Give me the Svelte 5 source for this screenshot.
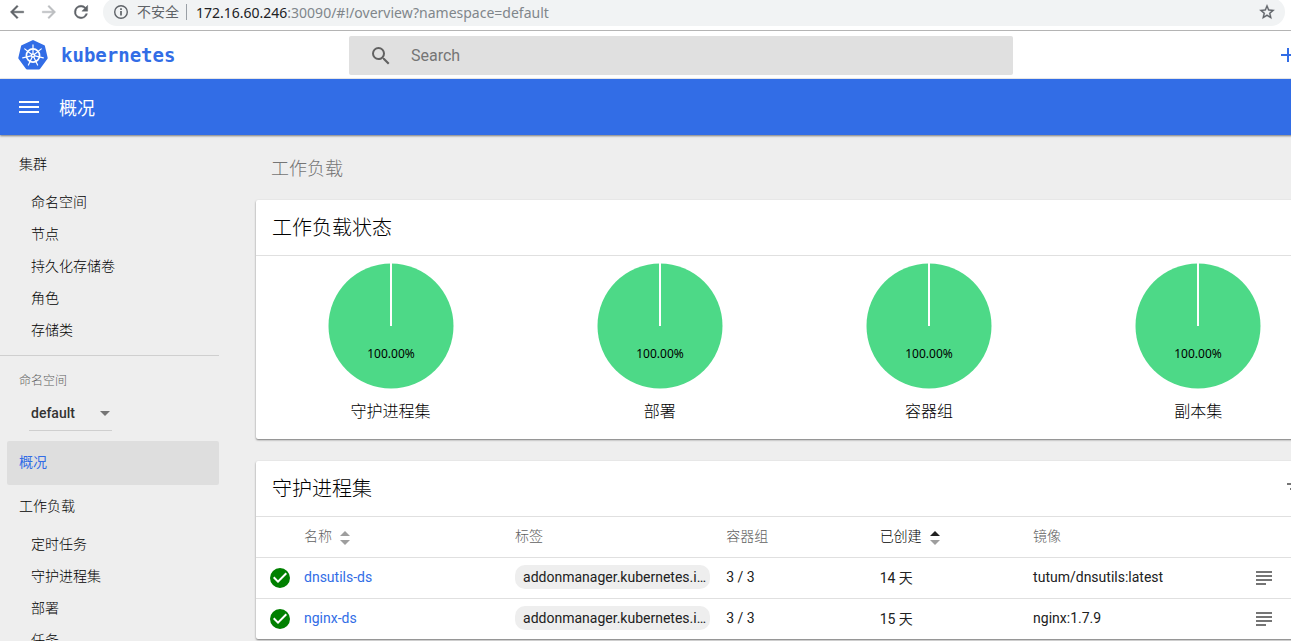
<script>
  const clusterItems = ['命名空间', '节点', '持久化存储卷', '角色', '存储类'];
  const workloadItems = ['定时任务', '守护进程集', '部署', '任务'];
  const charts = ['守护进程集', '部署', '容器组', '副本集'];
  const rows = [
    { name: 'dnsutils-ds', label: 'addonmanager.kubernetes.i…', pods: '3 / 3', age: '14 天', image: 'tutum/dnsutils:latest' },
    { name: 'nginx-ds', label: 'addonmanager.kubernetes.i…', pods: '3 / 3', age: '15 天', image: 'nginx:1.7.9' }
  ];
  const spokes = [0, 1, 2, 3, 4, 5, 6].map((i) => (i * 360) / 7);
</script>

{#snippet sorter(active)}
  <svg class="sorter" class:active width="10" height="14" viewBox="0 0 10 14" aria-hidden="true">
    <path class="up" d="M0 5 5 0l5 5z" />
    <path d="M0 9l5 5 5-5z" />
  </svg>
{/snippet}

<div class="window">
  <div class="toolbar">
    <button class="nav" aria-label="Back">
      <svg width="20" height="20" viewBox="0 0 24 24"><path d="M20 11H7.8l5.6-5.6L12 4l-8 8 8 8 1.4-1.4L7.8 13H20z" fill="#5f6368" stroke="#5f6368" stroke-width=".5" /></svg>
    </button>
    <button class="nav" aria-label="Forward">
      <svg width="20" height="20" viewBox="0 0 24 24"><path d="m12 4-1.4 1.4 5.6 5.6H4v2h12.2l-5.6 5.6L12 20l8-8z" fill="#bcbec1" stroke="#bcbec1" stroke-width=".5" /></svg>
    </button>
    <button class="nav" aria-label="Reload">
      <svg width="20" height="20" viewBox="0 0 24 24"><path d="M17.65 6.35A7.96 7.96 0 0 0 12 4a8 8 0 1 0 7.73 10h-2.08A6 6 0 1 1 12 6c1.66 0 3.14.69 4.22 1.78L13 11h7V4z" fill="#5f6368" stroke="#5f6368" stroke-width=".5" /></svg>
    </button>
    <div class="address">
      <svg width="16" height="16" viewBox="0 0 16 16" fill="none" stroke="#5f6368" aria-hidden="true">
        <circle cx="8" cy="8" r="6.3" stroke-width="1.4" />
        <path d="M8 7v4.5M8 4.3v1.6" stroke-width="1.7" />
      </svg>
      <span class="unsafe">不安全</span>
      <span class="url"><b>172.16.60.246</b>:30090/#!/overview?namespace=default</span>
      <button class="star" aria-label="Bookmark">
        <svg width="18" height="18" viewBox="0 0 24 24"><path d="m22 9.24-7.19-.62L12 2 9.19 8.63 2 9.24l5.46 4.73L5.82 21 12 17.27 18.18 21l-1.63-7.03zM12 15.4l-3.76 2.27 1-4.28-3.32-2.88 4.38-.38L12 6.1l1.71 4.04 4.38.38-3.32 2.88 1 4.28z" fill="#5f6368" stroke="#5f6368" stroke-width=".4" /></svg>
      </button>
    </div>
  </div>

  <div class="page">
    <header>
      <a class="brand" href="#!/overview">
        <svg width="30" height="30" viewBox="0 0 30 30" aria-hidden="true">
          <path d="M15 1.3 25.8 6.4 28.5 18 21 28.3H9L1.5 18 4.2 6.4z" fill="#326de6" stroke="#326de6" stroke-width="2.4" stroke-linejoin="round" />
          <g fill="none" stroke="#fff" transform="translate(15 15.5)">
            <circle r="6.6" stroke-width="1.7" />
            {#each spokes as a}
              <path d="M0-2V-10.6" stroke-width="1.2" stroke-linecap="round" transform="rotate({a})" />
            {/each}
            <circle r="2.2" fill="#fff" stroke="none" />
            <circle r=".8" fill="#326de6" stroke="none" />
          </g>
        </svg>
        <span>kubernetes</span>
      </a>
      <label class="search">
        <svg width="24" height="24" viewBox="0 0 24 24" aria-hidden="true"><path d="M15.5 14h-.79l-.28-.27A6.47 6.47 0 0 0 16 9.5 6.5 6.5 0 1 0 9.5 16c1.61 0 3.09-.59 4.23-1.57l.27.28v.79l5 4.99L20.49 19zm-6 0a4.5 4.5 0 1 1 0-9 4.5 4.5 0 0 1 0 9z" fill="#616161" /></svg>
        <input type="text" placeholder="Search" aria-label="Search" />
      </label>
      <button class="create" aria-label="Create">
        <svg width="24" height="24" viewBox="0 0 24 24"><path d="M19 13h-6v6h-2v-6H5v-2h6V5h2v6h6z" fill="#326de6" /></svg>
      </button>
    </header>

    <div class="action-bar">
      <button aria-label="Menu">
        <svg width="24" height="24" viewBox="0 0 24 24"><path d="M2 18h20v-2H2zm0-5h20v-2H2zm0-7v2h20V6z" fill="#fff" /></svg>
      </button>
      <h1>概况</h1>
    </div>

    <div class="body">
      <nav>
        <a class="top" href="#!/cluster">集群</a>
        {#each clusterItems as item}
          <a class="sub" href="#!/cluster">{item}</a>
        {/each}
        <hr />
        <div class="namespace">
          <label for="ns">命名空间</label>
          <div class="select">
            <select id="ns"><option>default</option></select>
            <svg width="10" height="5" viewBox="0 0 10 5" aria-hidden="true"><path d="M0 0h10L5 5z" fill="#757575" /></svg>
          </div>
        </div>
        <a class="top current" href="#!/overview">概况</a>
        <a class="top" href="#!/workload">工作负载</a>
        {#each workloadItems as item}
          <a class="sub" href="#!/workload">{item}</a>
        {/each}
      </nav>

      <main>
        <h2>工作负载</h2>

        <section class="card">
          <div class="card-title"><h3>工作负载状态</h3></div>
          <div class="charts">
            {#each charts as chart}
              <figure>
                <svg width="126" height="126" viewBox="0 0 126 126" role="img" aria-label={chart}>
                  <circle cx="63" cy="63" r="62.5" fill="#4dd987" />
                  <path d="M63 0v63" stroke="#fff" stroke-width="2" />
                  <text x="63" y="95" text-anchor="middle">100.00%</text>
                </svg>
                <figcaption>{chart}</figcaption>
              </figure>
            {/each}
          </div>
        </section>

        <section class="card">
          <div class="card-title">
            <h3>守护进程集</h3>
            <button aria-label="Filter">
              <svg width="24" height="24" viewBox="0 0 24 24"><path d="M10 18h4v-2h-4zM3 6v2h18V6zm3 7h12v-2H6z" fill="#757575" /></svg>
            </button>
          </div>
          <table>
            <colgroup>
              <col class="c-icon" /><col class="c-wide" /><col class="c-wide" /><col class="c-mid" /><col class="c-mid" /><col class="c-wide" /><col />
            </colgroup>
            <thead>
              <tr>
                <th></th>
                <th>名称{@render sorter(false)}</th>
                <th>标签</th>
                <th>容器组</th>
                <th class="sorted">已创建{@render sorter(true)}</th>
                <th>镜像</th>
                <th></th>
              </tr>
            </thead>
            <tbody>
              {#each rows as row}
                <tr>
                  <td class="status">
                    <svg width="24" height="24" viewBox="0 0 24 24" role="img" aria-label="OK"><path d="M12 2a10 10 0 1 0 0 20 10 10 0 0 0 0-20zm-2 15-5-5 1.41-1.41L10 14.17l7.59-7.59L19 8z" fill="#008000" /></svg>
                  </td>
                  <td><a href="#!/daemonset">{row.name}</a></td>
                  <td><span class="chip">{row.label}</span></td>
                  <td>{row.pods}</td>
                  <td>{row.age}</td>
                  <td>{row.image}</td>
                  <td class="logs">
                    <button aria-label="Logs">
                      <svg width="24" height="24" viewBox="0 0 24 24"><path d="M4 5h16v2H4zM4 9h16v2H4zM4 13h16v2H4zM4 17h10v2H4z" fill="#757575" /></svg>
                    </button>
                  </td>
                </tr>
              {/each}
            </tbody>
          </table>
        </section>
      </main>
    </div>
  </div>
</div>

<style>
  :global(body) {
    background: #eee;
    overflow: hidden;
  }
  .window {
    height: 100vh;
    overflow: hidden;
    font-family: Roboto, 'Noto Sans CJK SC', sans-serif;
    font-size: 14px;
    color: #212121;
  }
  button {
    display: flex;
    padding: 0;
    border: 0;
    background: none;
  }
  svg {
    display: block;
    flex: none;
  }
  a {
    color: inherit;
    text-decoration: none;
  }
  h1, h2, h3, figure {
    margin: 0;
    font-weight: 400;
  }
  h2, h3, figcaption, nav a, nav label, th {
    font-weight: 300;
  }
  h3, figcaption, nav {
    color: #000;
  }

  .toolbar {
    display: flex;
    align-items: flex-start;
    gap: 12px;
    height: 30px;
    padding: 0 6px 0 7px;
    background: #fff;
    border-bottom: 1px solid #b4b4b4;
  }
  .nav {
    margin-top: 2px;
  }
  .address {
    display: flex;
    flex: 1;
    align-items: center;
    height: 28px;
    margin-top: -2px;
    padding: 0 9px 0 10px;
    border-radius: 14px;
    background: #f1f3f4;
    color: #80868b;
    font-family: 'Noto Sans', 'Noto Sans CJK SC', sans-serif;
  }
  .unsafe {
    margin-left: 8px;
    padding-right: 7px;
    border-right: 1px solid #9aa0a6;
    color: #5f6368;
    line-height: 16px;
  }
  .url {
    flex: 1;
    margin-left: 9px;
    white-space: nowrap;
  }
  .url b {
    font-weight: 400;
    color: #202124;
  }

  .page {
    width: calc(100% + 58px);
  }
  header {
    display: flex;
    align-items: center;
    height: 48px;
    padding: 0 49px 0 18px;
    background: #fff;
    box-sizing: border-box;
    border-bottom: 1px solid #eee;
  }
  .brand {
    display: flex;
    align-items: center;
    gap: 13px;
    width: 331px;
    color: #326de6;
    font: bold 19px 'DejaVu Sans Mono', monospace;
  }
  .search {
    display: flex;
    align-items: center;
    align-self: flex-end;
    gap: 18px;
    width: 52%;
    max-width: 664px;
    height: 39px;
    margin-bottom: 3px;
    padding-left: 20px;
    box-sizing: border-box;
    border-radius: 2px;
    background: #e0e0e0;
  }
  .search input {
    flex: 1;
    min-width: 0;
    border: 0;
    padding: 0;
    outline: 0;
    background: none;
    font: 16px Roboto, sans-serif;
    color: #212121;
  }
  .search input::placeholder {
    color: #757575;
  }
  .create {
    margin-left: auto;
  }
  .action-bar {
    position: relative;
    display: flex;
    align-items: center;
    gap: 18px;
    height: 56px;
    padding: 0 17px;
    background: #326de6;
    box-shadow: 0 1px 2px rgba(0, 0, 0, 0.5);
    color: #fff;
  }
  h1 {
    padding-top: 4px;
    font-size: 18px;
    line-height: 24px;
  }

  .body {
    display: flex;
    background: #eee;
  }
  nav {
    width: 219px;
    flex: none;
    padding-top: 8px;
  }
  nav a {
    display: block;
    padding-bottom: 2px;
  }
  .top {
    margin-left: 7px;
    padding-left: 12px;
    border-radius: 2px;
    line-height: 42px;
  }
  .sub {
    padding-left: 31px;
    line-height: 30px;
  }
  .current {
    background: #dedede;
    color: #326de6;
    font-weight: 400;
  }
  hr {
    height: 1px;
    margin: 8px 0 0;
    border: 0;
    background: #cfcfcf;
  }
  .namespace {
    padding: 16px 0 10px 19px;
  }
  .namespace label {
    display: block;
    font-size: 12px;
    line-height: 18px;
    color: #616161;
  }
  .select {
    display: flex;
    align-items: center;
    width: 83px;
    height: 34px;
    margin: 6px 0 0 10px;
    border-bottom: 1px solid #cfcfcf;
  }
  select {
    flex: 1;
    min-width: 0;
    padding: 0 0 0 2px;
    border: 0;
    appearance: none;
    background: none;
    font: 500 14px Roboto, sans-serif;
    color: #333;
  }
  .select svg {
    margin-right: 2px;
  }

  main {
    flex: 1;
    min-width: 0;
    padding: 1px 16px 16px 37px;
  }
  h2 {
    padding: 19px 15px 18px;
    font-size: 18px;
    line-height: 27px;
    color: #757575;
  }
  .card {
    margin-bottom: 22px;
    border-radius: 2px;
    background: #fff;
    box-shadow: 0 1px 2px rgba(0, 0, 0, 0.5);
  }
  .card-title {
    display: flex;
    align-items: center;
    justify-content: space-between;
    height: 55px;
    padding: 0 25px 0 16px;
    border-bottom: 1px solid #e0e0e0;
  }
  h3 {
    font-size: 20px;
    line-height: 28px;
  }
  .charts {
    display: grid;
    grid-template-columns: repeat(4, 1fr);
    padding: 7px 0 15px;
  }
  figure {
    display: flex;
    flex-direction: column;
    align-items: center;
    gap: 11px;
  }
  figure text {
    font: 12px 'Noto Sans', sans-serif;
    fill: #000;
  }
  figcaption {
    font-size: 16px;
    line-height: 24px;
  }

  table {
    width: 100%;
    table-layout: fixed;
    border-collapse: collapse;
  }
  .c-icon {
    width: 48px;
  }
  .c-wide {
    width: 19.6%;
  }
  .c-mid {
    width: 14.25%;
  }
  th, td {
    height: 40px;
    padding: 0;
    text-align: left;
    white-space: nowrap;
    box-sizing: border-box;
  }
  th {
    padding-bottom: 4px;
    color: #616161;
  }
  th.sorted {
    color: #000;
  }
  tbody tr {
    border-top: 1px solid #e0e0e0;
  }
  tbody td {
    height: 41px;
    padding-bottom: 1px;
  }
  td a {
    color: #326de6;
  }
  .sorter {
    display: inline-block;
    margin-left: 8px;
    vertical-align: -4px;
    fill: #9e9e9e;
  }
  .active .up {
    fill: #212121;
  }
  tbody .status {
    padding: 0 0 0 12px;
  }
  tbody .logs {
    padding: 0 0 0 8px;
  }
  .chip {
    display: block;
    box-sizing: border-box;
    margin-right: 16px;
    padding: 0 0 0 8px;
    overflow: hidden;
    border-radius: 10px;
    background: #eee;
    line-height: 24px;
  }
</style>
